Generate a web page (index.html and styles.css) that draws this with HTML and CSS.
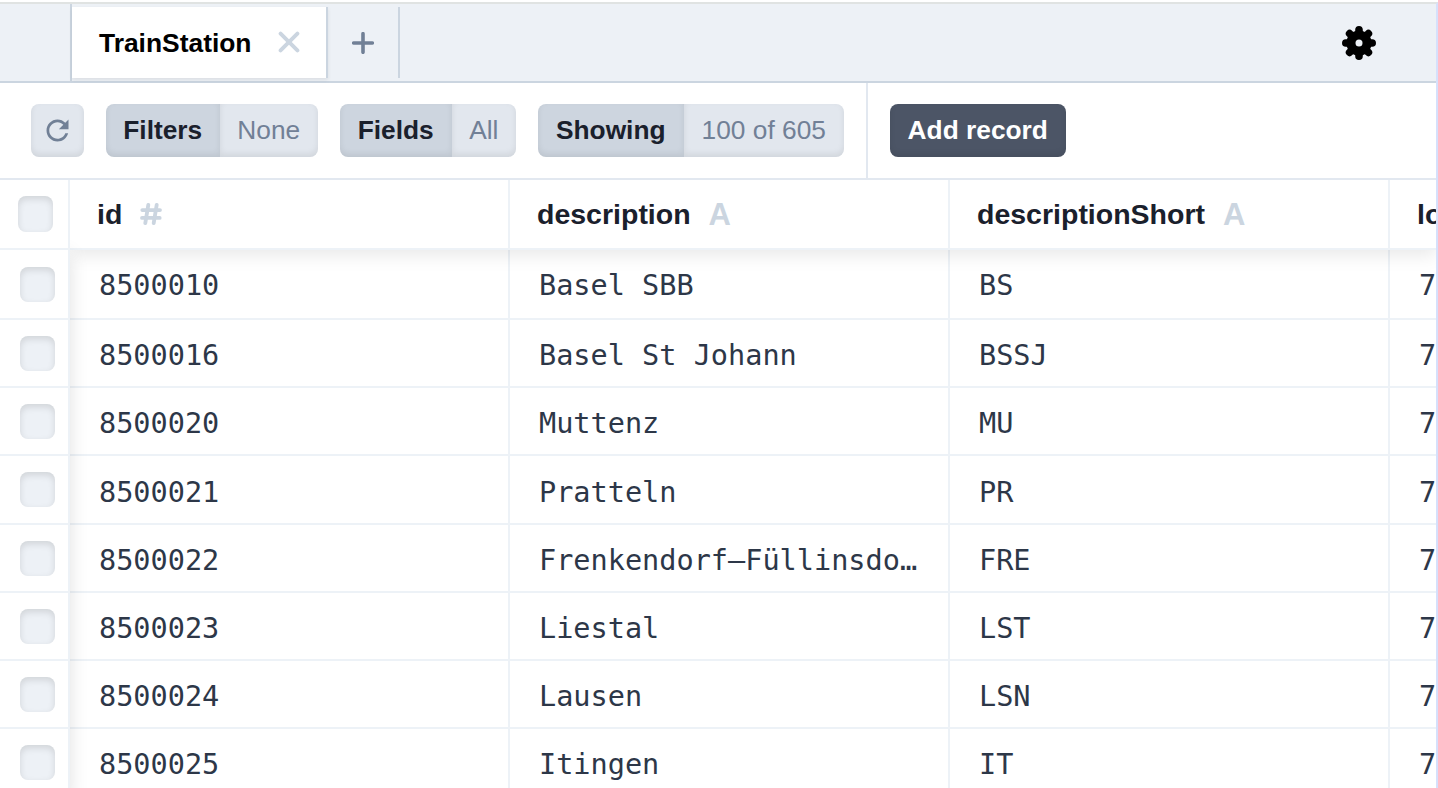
FILE: index.html
```html
<!DOCTYPE html>
<html lang="en">
<head>
<meta charset="utf-8">
<title>TrainStation</title>
<link rel="stylesheet" href="styles.css">
</head>
<body>
<div class="app">
  <header class="tabbar">
    <div class="tabbar-lead"></div>
    <div class="tab">
      <span class="tab-label">TrainStation</span>
      <svg class="tab-close" viewBox="0 0 22 22"><path d="M2.6 2.6 19.4 19.4M19.4 2.6 2.6 19.4"/></svg>
    </div>
    <div class="tab-add"><svg viewBox="0 0 22 22"><path d="M11 1.7V20.3M1.7 11H20.3"/></svg></div>
    <svg class="gear" viewBox="-17 -17 34 34">
      <path d="M0-13.2V13.2M-13.2 0H13.2M-9.4-9.4 9.4 9.4M9.4-9.4-9.4 9.4"/>
      <circle class="gear-body" r="12.6"/>
      <circle class="gear-hole" r="3.5"/>
    </svg>
  </header>

  <div class="toolbar">
    <button class="btn refresh"><svg viewBox="0 0 24 24"><path d="M17.65 6.35C16.2 4.9 14.21 4 12 4c-4.42 0-7.99 3.58-7.99 8s3.57 8 7.99 8c3.73 0 6.84-2.55 7.73-6h-2.08c-.82 2.33-3.04 4-5.65 4-3.31 0-6-2.69-6-6s2.69-6 6-6c1.66 0 3.14.69 4.22 1.78L13 11h7V4l-2.35 2.35z"/></svg></button>
    <div class="group filters"><button class="btn name">Filters</button><button class="btn value">None</button></div>
    <div class="group fields"><button class="btn name">Fields</button><button class="btn value">All</button></div>
    <div class="group showing"><button class="btn name">Showing</button><button class="btn value">100 of 605</button></div>
    <div class="divider"></div>
    <button class="btn add">Add record</button>
  </div>

  <main class="grid">
    <div class="gutter">
      <div class="gutter-head"><span class="check"></span></div>
      <div class="gutter-body">
        <div class="pick"><span class="check"></span></div>
        <div class="pick"><span class="check"></span></div>
        <div class="pick"><span class="check"></span></div>
        <div class="pick"><span class="check"></span></div>
        <div class="pick"><span class="check"></span></div>
        <div class="pick"><span class="check"></span></div>
        <div class="pick"><span class="check"></span></div>
        <div class="pick"><span class="check"></span></div>
      </div>
    </div>
    <div class="sheet">
      <div class="head">
        <div class="th">id <svg class="hash" viewBox="0 0 22 22"><path d="M8.3 1.9 5.3 20.1M16.7 1.9 13.7 20.1M2.3 7.1H20M2 14.9H19.7"/></svg></div>
        <div class="th">description <span class="type">A</span></div>
        <div class="th">descriptionShort <span class="type">A</span></div>
        <div class="th">lo</div>
      </div>
      <div class="rows">
        <div class="row"><div class="td">8500010</div><div class="td">Basel SBB</div><div class="td">BS</div><div class="td">7</div></div>
        <div class="row"><div class="td">8500016</div><div class="td">Basel St Johann</div><div class="td">BSSJ</div><div class="td">7</div></div>
        <div class="row"><div class="td">8500020</div><div class="td">Muttenz</div><div class="td">MU</div><div class="td">7</div></div>
        <div class="row"><div class="td">8500021</div><div class="td">Pratteln</div><div class="td">PR</div><div class="td">7</div></div>
        <div class="row"><div class="td">8500022</div><div class="td">Frenkendorf–Füllinsdo…</div><div class="td">FRE</div><div class="td">7</div></div>
        <div class="row"><div class="td">8500023</div><div class="td">Liestal</div><div class="td">LST</div><div class="td">7</div></div>
        <div class="row"><div class="td">8500024</div><div class="td">Lausen</div><div class="td">LSN</div><div class="td">7</div></div>
        <div class="row"><div class="td">8500025</div><div class="td">Itingen</div><div class="td">IT</div><div class="td">7</div></div>
      </div>
    </div>
  </main>
</div>
</body>
</html>
```
FILE: styles.css
```css
* { box-sizing: border-box; }

body {
  margin: 0;
  padding-top: 2px;
  height: 788px;
  overflow: hidden;
  background: #fff;
  font-family: "Liberation Sans", Arial, sans-serif;
  color: #1a202c;
}

.app {
  display: flex;
  flex-direction: column;
  height: 786px;
  border-top: 2px solid #e0e3e2;
  border-right: 2px solid #d6e0fb;
  overflow: hidden;
}

/* Tabs */
.tabbar {
  display: flex;
  flex: none;
  height: 79px;
  padding-right: 60.5px;
  background: #edf1f6;
  border-bottom: 2px solid #cbd5e0;
}

.tabbar-lead { width: 72px; border-right: 2px solid #cbd5e0; }

.tab {
  display: flex;
  align-items: center;
  gap: 26px;
  width: 256px;
  height: 71px;
  margin-top: 3px;
  padding-left: 27px;
  background: #fff;
  border-right: 2px solid #cbd5e0;
  box-shadow: 0 2px 4px rgba(0, 0, 0, .08);
}

.tab-label { width: 153px; padding-top: 1px; color: #000; font-size: 26.4px; font-weight: 700; white-space: nowrap; }
.tab-close { width: 22px; height: 22px; margin-top: -1px; fill: none; stroke: #cbd5e0; stroke-width: 3.9; stroke-linecap: round; }

.tab-add {
  display: flex;
  align-items: center;
  justify-content: center;
  width: 72px;
  height: 71px;
  margin-top: 3px;
  border-right: 2px solid #cbd5e0;
}
.tab-add svg { width: 22px; height: 22px; fill: none; stroke: #718096; stroke-width: 3.6; stroke-linecap: round; }

.gear { width: 34px; height: 34px; margin: 21.5px 0 0 auto; }
.gear path { stroke: #000; stroke-width: 7.6; stroke-linecap: round; }
.gear-hole { fill: #edf1f6; }

/* Toolbar */
.toolbar {
  display: flex;
  flex: none;
  align-items: center;
  gap: 22px;
  height: 97px;
  padding-left: 31px;
  border-bottom: 2px solid #e2e8f0;
}

.btn {
  display: flex;
  align-items: center;
  justify-content: center;
  height: 53px;
  padding: 0 .5px 1px 0;
  border: 0;
  border-radius: 8px;
  font: 26.3px "Liberation Sans", Arial, sans-serif;
  white-space: nowrap;
  box-shadow: inset 0 -3px 6px rgba(0, 0, 0, .08);
}

.refresh { width: 53px; background: #e2e7ee; }
.refresh svg { width: 33px; height: 33px; fill: #718096; }

.group { display: flex; }
.name { border-radius: 8px 0 0 8px; background: #cdd5df; color: #1a202c; font-weight: 700; }
.value { flex: 1; border-radius: 0 8px 8px 0; background: #e2e7ee; color: #718096; }
.filters { width: 212px; }
.filters .name { width: 114px; }
.fields { width: 176px; }
.fields .name { width: 112px; }
.showing { width: 306px; }
.showing .name { width: 146px; }

.divider { align-self: stretch; width: 2px; background: #e2e8f0; }
.add { width: 176px; background: #4c5566; color: #fff; font-weight: 700; }

/* Data grid */
.grid { display: flex; flex: 1; min-height: 0; }

.gutter { position: relative; z-index: 2; flex: none; width: 70px; }
.gutter-head {
  position: relative;
  z-index: 1;
  height: 70px;
  padding: 16px 0 0 18px;
  background: #fff;
  border-right: 2px solid #edf2f7;
  border-bottom: 2px solid #edf2f7;
}
.gutter-body { box-shadow: 0 4px 18px rgba(0, 0, 0, .12); }

.check {
  display: block;
  width: 35px;
  height: 35px;
  border-radius: 8px;
  background: #edf1f6;
  box-shadow: inset 0 3px 7px rgba(0, 0, 0, .12);
}
.gutter-head .check { height: 36px; }

.pick {
  height: 68.2px;
  padding: 16px 0 0 20px;
  background: #fff;
  border-right: 2px solid #edf2f7;
  border-bottom: 2px solid #edf2f7;
}
.pick:first-child { height: 70px; padding-top: 17px; }

.sheet { flex: 1; min-width: 0; overflow: hidden; }
.head {
  position: relative;
  z-index: 1;
  display: flex;
  height: 70px;
  background: #fff;
  border-bottom: 2px solid #edf2f7;
  box-shadow: 0 4px 18px rgba(0, 0, 0, .1);
}

.th, .td { flex: none; width: 440px; border-right: 2px solid #edf2f7; white-space: nowrap; }
.th {
  display: flex;
  align-items: center;
  gap: 18px;
  padding-left: 27px;
  font-size: 28.5px;
  font-weight: 700;
}
.hash { width: 22px; height: 22px; fill: none; stroke: #cbd5e0; stroke-width: 3.8; stroke-linecap: round; }
.type { padding-top: 2px; color: #cbd5e0; font-size: 31px; }

.row { display: flex; height: 68.2px; border-bottom: 2px solid #edf2f7; }
.row:first-child { height: 70px; }
.td {
  padding: 1px 0 0 29px;
  color: #2d3748;
  font: 28.55px/68px "DejaVu Sans Mono", monospace;
}
.row:nth-child(4) .td { padding-top: 1.6px; }
```
